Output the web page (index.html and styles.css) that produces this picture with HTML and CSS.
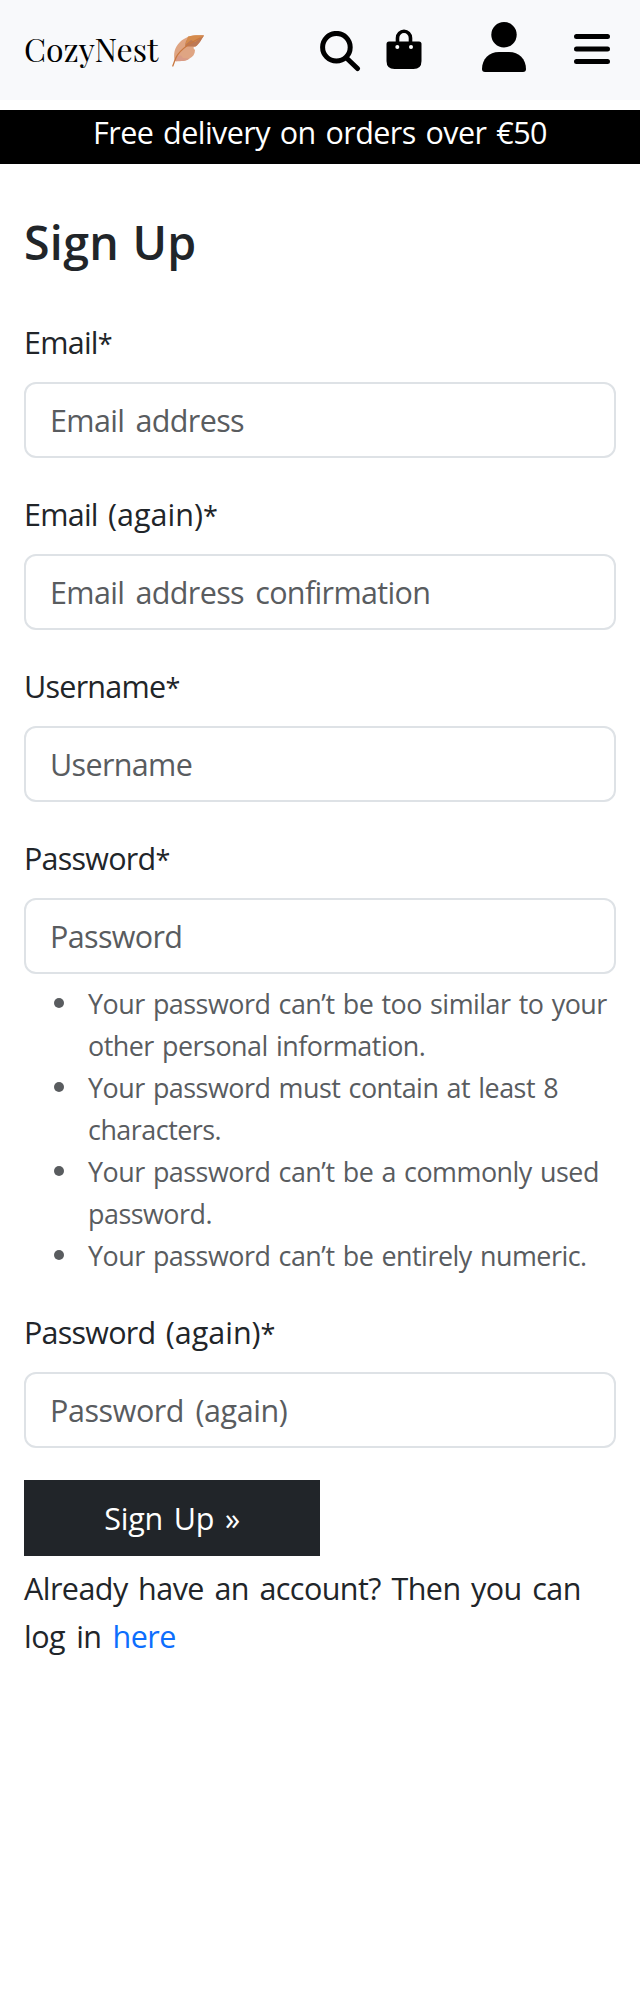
FILE: index.html
```
<!DOCTYPE html>
<html lang="en">
<head>
<meta charset="utf-8">
<title>CozyNest – Sign Up</title>
<link rel="stylesheet" href="styles.css">
</head>
<body>
<header class="navbar">
  <a class="brand" href="#"><span class="brand-name">CozyNest</span>
    <svg class="leaf" width="34" height="34" viewBox="0 0 34 34" aria-hidden="true">
      <path fill="#dfa583" d="M33 1.500C24 .5 15 2 9 8 3 14 2.500 20 3.500 26.500L5 27.500C10 27 15 27.500 18.500 24.500 22 23 24 20 24 16 22 14 22 13 24.500 12.500 28 10.500 30 6 33 1.500Z"/>
      <path fill="#bd7854" d="M15 7 20 3 33 1.500C30 6 28 10.500 24.500 12.500L14 12.500Z"/>
      <path fill="#d58b4c" d="M17 2.500C22 1 28 1 33 1.500L24 8 20 6 14 11Z"/>
      <path fill="#d99b87" d="M5 22 10 21.500 12 24 18.500 24.500C15 27.500 10 27 4 27Z"/>
      <path fill="none" stroke="#c9783f" stroke-width="1.300" stroke-linecap="round" d="M29 4C17 10 7 17 4 26L1.800 32"/>
    </svg>
  </a>
  <nav class="tools">
    <svg class="search" width="41" height="41" viewBox="0 0 41 41"><circle cx="16.400" cy="16.200" r="13.800" fill="none" stroke="#000" stroke-width="5"/><path d="M26.500 27 37.500 37.500" stroke="#000" stroke-width="5" stroke-linecap="round"/></svg>
    <svg class="bag" width="36" height="41" viewBox="0 0 36 41"><path fill="none" stroke="#000" stroke-width="3.600" d="M11.500 15V9A6.500 6.700 0 0 1 24.500 9V15"/><path d="M3 12.500H33Q35.500 12.500 35.500 15V32Q35.500 40 27.500 40H8.500Q.5 40 .5 32V15Q.5 12.500 3 12.500Z"/><circle cx="11.300" cy="18" r="2" fill="#fff"/><circle cx="25" cy="18" r="2" fill="#fff"/></svg>
    <svg class="user" width="44" height="50" viewBox="0 0 44 50"><circle cx="22" cy="12.700" r="12.700"/><path d="M17 30H27C37 30 44 37 44 47Q44 50 41 50H3Q0 50 0 47C0 37 7 30 17 30Z"/></svg>
    <svg class="menu" width="36" height="30" viewBox="0 0 36 30"><path d="M2.500 2.500H33.500M2.500 15H33.500M2.500 27.500H33.500" stroke="#000" stroke-width="5" stroke-linecap="round"/></svg>
  </nav>
</header>
<div class="delivery">Free delivery on orders over €50</div>
<main class="page">
  <h1 class="title">Sign Up</h1>
  <form>
    <div class="field"><label class="label" for="email">Email<span class="star">*</span></label><input class="input" id="email" type="email" placeholder="Email address"></div>
    <div class="field"><label class="label" for="email2">Email <span class="again">(again)</span><span class="star">*</span></label><input class="input" id="email2" type="email" placeholder="Email address confirmation"></div>
    <div class="field"><label class="label" for="username">Username<span class="star">*</span></label><input class="input" id="username" type="text" placeholder="Username"></div>
    <div class="field"><label class="label" for="password">Password<span class="star">*</span></label><input class="input" id="password" type="password" placeholder="Password">
      <ul class="hints">
        <li class="hint">Your password can’t be too similar to your other personal information.</li>
        <li class="hint">Your password must contain at least 8 characters.</li>
        <li class="hint">Your password can’t be a commonly used password.</li>
        <li class="hint">Your password can’t be entirely numeric.</li>
      </ul>
    </div>
    <div class="field"><label class="label" for="password2">Password <span class="again">(again)</span><span class="star">*</span></label><input class="input loose" id="password2" type="password" placeholder="Password (again)"></div>
    <button class="submit" type="submit">Sign Up »</button>
  </form>
  <p class="login">Already have an account? Then you can <span class="tail">log in <a class="link" href="#">here</a></span></p>
</main>
</body>
</html>
```

FILE: styles.css
```
* { box-sizing: border-box; }
body {
  margin: 0;
  background: #fff;
  color: #212529;
  font: 30.5px/48px "Open Sans", "Noto Sans", sans-serif;
  letter-spacing: -0.55px;
  word-spacing: 3.1px;
}
.navbar {
  display: flex;
  justify-content: space-between;
  align-items: flex-start;
  height: 100px;
  padding: 0 30px 0 24px;
  background: #f8f9fb;
}
.brand {
  display: flex;
  gap: 13px;
  padding-top: 25px;
  color: #000;
  text-decoration: none;
}
.brand-name {
  font: 32px/48px "Playfair Display", "Liberation Serif", serif;
  letter-spacing: 0;
}
.leaf { margin-top: 9px; }
.tools { display: flex; align-items: flex-start; }
.search { margin-top: 31px; }
.bag { margin: 29px 0 0 25px; }
.user { margin: 22px 0 0 60px; }
.menu { margin: 34px 0 0 48px; }
.delivery {
  height: 54px;
  margin-top: 10px;
  background: #000;
  color: #fff;
  line-height: 44px;
  text-align: center;
  word-spacing: 2.4px;
}
.page { padding: 50px 24px 0; }
.title {
  margin: 0;
  height: 104px;
  font-size: 46.5px;
  font-weight: 600;
  line-height: 57.6px;
  letter-spacing: 0.3px;
  word-spacing: 1px;
}
.field { margin-bottom: 32px; }
.label { display: block; height: 64px; letter-spacing: -0.75px; }
.again { letter-spacing: 0; }
.star { font-size: 27px; }
.input {
  display: block;
  width: 100%;
  height: 76px;
  padding: 0 24px;
  border: 2px solid #dee2e6;
  border-radius: 12px;
  background: #fff;
  font: inherit;
  letter-spacing: -0.65px;
  word-spacing: 4px;
}
.loose { letter-spacing: -0.42px; word-spacing: 3.8px; }
.input::placeholder { color: #595c5f; opacity: 1; }
.hints {
  margin: 9px 0 -1px;
  padding-left: 64px;
  list-style: none;
  color: #595c5f;
  font-size: 26.9px;
  line-height: 42px;
  letter-spacing: -0.5px;
  word-spacing: 1.7px;
}
.hint::before {
  content: "";
  display: inline-block;
  width: 10px;
  height: 10px;
  margin: 0 24px 0 -34px;
  border-radius: 50%;
  background: #595c5f;
  vertical-align: 6px;
}
.submit {
  display: block;
  width: 296px;
  height: 76px;
  border: 0;
  background: #212529;
  color: #fff;
  font: inherit;
  letter-spacing: -0.2px;
  word-spacing: 3px;
}
.login { margin: 8px 0 0; }
.tail { word-spacing: 3.8px; }
.link { color: #0d6efd; text-decoration: none; }
```
